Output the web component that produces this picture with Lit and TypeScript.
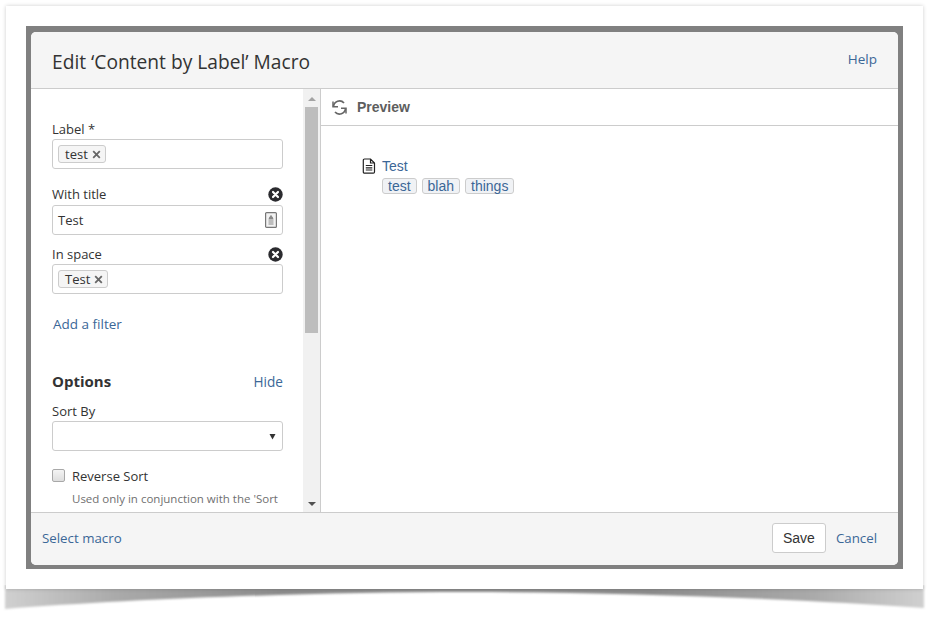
import { LitElement, html, css, svg } from "lit";
import { customElement } from "lit/decorators.js";

const clearIcon = html`<svg class="clear" width="15" height="15" viewBox="0 0 15 15"><circle cx="7.5" cy="7.500" r="7.2" fill="#2b2b2f"/><path d="M5 5l5 5M10 5l-5 5" stroke="#fff" stroke-width="2.2" stroke-linecap="round"/></svg>`;

@customElement("app-root")
export class AppRoot extends LitElement {
  static styles = css`
    :host { display: block; width: 937px; height: 618px; position: relative; overflow: hidden; background: #fff; font-family: "Open Sans", "Noto Sans", sans-serif; color: #333; }
    * { box-sizing: border-box; }
    .shadow { position: absolute; left: 0; top: 585px; }
    .paper { position: absolute; left: 6px; top: 6px; width: 917px; height: 583px; background: #fff; box-shadow: 0 0 4px rgba(0,0,0,.2); padding: 20px; }
    .frame { width: 877px; height: 543px; background: #808080; padding: 6px 5px 4px 5px; }
    .dialog { width: 867px; height: 533px; background: #fff; border-radius: 5px; overflow: hidden; display: flex; flex-direction: column; }
    header { height: 57px; flex: none; background: #f5f5f5; border-bottom: 1px solid #ccc; display: flex; align-items: center; justify-content: space-between; padding: 8px 21px; }
    h1 { margin: 0; font-size: 19.2px; font-weight: 400; color: #333; position: relative; top: 1px; }
    a { color: #3b6797; text-decoration: none; font-size: 13.3px; }
    header a { font-size: 13.5px; position: relative; top: -1px; }
    .body { flex: 1; min-height: 0; display: flex; }
    .left { width: 272px; flex: none; padding: 31px 20px 0 21px; overflow: hidden; font-size: 13px; }
    .label-row { display: flex; justify-content: space-between; align-items: center; height: 18px; line-height: 18px; color: #333; }
    .input { height: 30px; border: 1px solid #ccc; border-radius: 3px; background: #fff; margin-top: 1px; display: flex; align-items: center; padding: 0 5px; justify-content: space-between; }
    .tag { display: inline-flex; align-items: center; height: 18px; border: 1px solid #ccc; border-radius: 3px; background: #f5f5f5; padding: 0 4px 0 6px; gap: 4px; font-size: 13px; color: #333; }
    .tag svg { display: block; }
    .field { margin-top: 16px; }
    .field2 { margin-top: 10px; }
    .plain { font-size: 13px; color: #333; }
    .title-input { margin-top: 2px; }
    .add { display: block; margin-top: 21px; line-height: 18px; padding-left: 1px; font-size: 13.5px; }
    .options { display: flex; justify-content: space-between; align-items: center; margin-top: 38px; height: 20px; }
    .options a { font-size: 13.6px; }
    .options b { font-size: 15px; font-weight: 700; color: #333; }
    .sort { margin-top: 11px; }
    .select { height: 30px; border: 1px solid #ccc; border-radius: 3px; background: #fff; margin-top: 1px; display: flex; justify-content: flex-end; align-items: center; padding-right: 6px; }
    .check { display: flex; align-items: center; gap: 7px; margin-top: 16px; height: 18px; }
    .box { width: 13px; height: 13px; background: linear-gradient(#f4f4f4, #dedede); border: 1px solid #a8a8a8; border-radius: 2px; flex: none; position: relative; top: -1px; }
    .help { margin: 6px 0 0 20px; font-size: 11.5px; line-height: 16px; color: #707070; white-space: nowrap; }
    .scroll { width: 17px; flex: none; background: #f1f1f1; position: relative; display: flex; flex-direction: column; align-items: center; padding-top: 18px; }
    .thumb { width: 13px; height: 226px; background: #bdbdbd; }
    .up, .down { position: absolute; left: 5px; width: 0; height: 0; border-left: 4px solid transparent; border-right: 4px solid transparent; }
    .up { top: 8px; border-bottom: 4px solid #a3a3a3; }
    .down { bottom: 6px; border-top: 4px solid #505050; }
    .right { flex: 1; border-left: 1px solid #ccc; display: flex; flex-direction: column; }
    .bar { height: 37px; flex: none; border-bottom: 1px solid #ccc; display: flex; align-items: center; padding-left: 10px; gap: 9px; font-family: "Liberation Sans", Arial, sans-serif; font-weight: 700; font-size: 14px; color: #5e5e5e; }
    .content { padding: 31px 0 0 41px; display: flex; gap: 6px; font-family: "Liberation Sans", Arial, sans-serif; font-size: 14px; }
    .content svg { margin-top: 1px; flex: none; }
    .title { color: #3b6797; line-height: 18px; display: block; font-size: 14px; }
    .labels { display: flex; gap: 5px; margin-top: 3px; }
    .lb { height: 16px; line-height: 15px; border: 1px solid #ccc; border-radius: 3px; background: #f0f2f5; color: #3b6797; padding: 0 5px; font-size: 14px; }
    footer { height: 53px; flex: none; background: #f5f5f5; border-top: 1px solid #ccc; display: flex; align-items: center; justify-content: space-between; padding: 0 21px 2px 11px; }
    .actions { display: flex; align-items: center; gap: 10px; }
    button { width: 54px; height: 30px; border: 1px solid #ccc; border-radius: 3px; background: #fff; font: 14px "Liberation Sans", Arial, sans-serif; color: #333; padding: 0; }
  `;

  private x() {
    return html`<svg width="9" height="9" viewBox="0 0 9 9"><path d="M1.2 1.2l6.6 6.6M7.8 1.2L1.2 7.8" stroke="#666" stroke-width="1.8"/></svg>`;
  }

  render() {
    return html`
      <svg class="shadow" width="937" height="33" viewBox="0 0 937 33">
        <defs>
          <linearGradient id="l" x1="0" y1="0" x2="1" y2="0"><stop offset="0" stop-color="#d0d0d0"/><stop offset=".12" stop-color="#aaa"/><stop offset=".3" stop-color="#8c8c8c"/><stop offset=".7" stop-color="#8c8c8c"/><stop offset=".88" stop-color="#aaa"/><stop offset="1" stop-color="#d0d0d0"/></linearGradient>
          <filter id="b" x="-2%" y="-30%" width="104%" height="160%"><feGaussianBlur stdDeviation="0.9"/></filter>
        </defs>
        ${svg`<path d="M5 0H924V23C800 14 620 7 468 7S130 14 5 24Z" fill="url(#l)" filter="url(#b)"/>`}
      </svg>
      <div class="paper">
        <div class="frame">
          <div class="dialog">
            <header><h1>Edit ‘Content by Label’ Macro</h1><a href="#">Help</a></header>
            <div class="body">
              <div class="left">
                <div class="label-row">Label *</div>
                <div class="input"><span class="tag">test ${this.x()}</span></div>
                <div class="field"><div class="label-row">With title ${clearIcon}</div>
                  <div class="input title-input"><span class="plain">Test</span>
                    <svg width="12" height="16" viewBox="0 0 12 16"><rect x=".6" y=".6" width="10.8" height="14.8" rx="1" fill="#f2f2f2" stroke="#777" stroke-width="1.2"/><path d="M6 3.500l2 3H4zM3.500 8h5M3.500 10h5M3.500 12h5" fill="#888" stroke="#888"/></svg>
                  </div></div>
                <div class="field2"><div class="label-row">In space ${clearIcon}</div>
                  <div class="input"><span class="tag">Test ${this.x()}</span></div></div>
                <a class="add" href="#">Add a filter</a>
                <div class="options"><b>Options</b><a href="#">Hide</a></div>
                <div class="sort"><div class="label-row">Sort By</div>
                  <div class="select"><svg width="7" height="7" viewBox="0 0 7 7"><path d="M.5 1h6L3.500 6.500z" fill="#333"/></svg></div></div>
                <div class="check"><span class="box"></span>Reverse Sort</div>
                <div class="help">Used only in conjunction with the 'Sort</div>
              </div>
              <div class="scroll"><span class="up"></span><div class="thumb"></div><span class="down"></span></div>
              <div class="right">
                <div class="bar">
                  <svg width="17" height="17" viewBox="0 0 17 17" fill="none" stroke="#666" stroke-width="1.7"><path d="M2.500 7.500A6 6 0 0 1 13 4"/><path d="M14.500 9.500A6 6 0 0 1 4 13"/><path d="M2 2.500v5.300h5M15 14.500V9.200h-5" stroke-width="1.500"/></svg>
                  Preview
                </div>
                <div class="content">
                  <svg width="14" height="16" viewBox="0 0 14 16" fill="none" stroke="#222" stroke-width="1.2"><path d="M2.500 1h6l4 4v9a1.200 1.200 0 0 1-1.200 1.200H2.500A1.200 1.200 0 0 1 1.300 14V2.200A1.200 1.200 0 0 1 2.500 1zM8.500 1v4h4M3.800 7.500h6.500M3.800 9.800h6.500M3.800 12h6.500"/></svg>
                  <div>
                    <a class="title" href="#">Test</a>
                    <div class="labels"><span class="lb">test</span><span class="lb">blah</span><span class="lb">things</span></div>
                  </div>
                </div>
              </div>
            </div>
            <footer><a href="#">Select macro</a><div class="actions"><button>Save</button><a href="#">Cancel</a></div></footer>
          </div>
        </div>
      </div>
    `;
  }
}
